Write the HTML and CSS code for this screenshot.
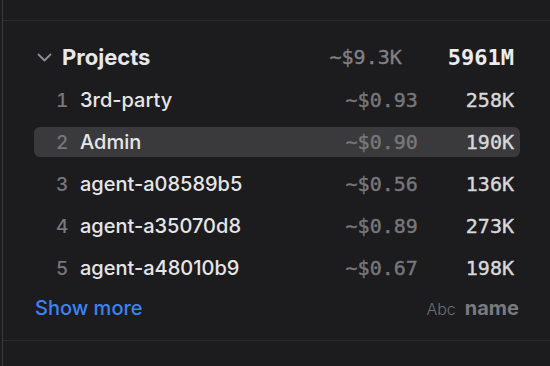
FILE: index.html
```html
<!DOCTYPE html>
<html>
<head>
<meta charset="utf-8">
<link rel="stylesheet" href="styles.css">
</head>
<body>
<div class="frame">
  <div class="top"></div>
  <section class="panel">
    <div class="header">
      <svg class="chev" width="15" height="9" viewBox="0 0 15 9"><path d="M1.5 1.5 L7.5 7.5 L13.5 1.5" fill="none" stroke="#8e8e93" stroke-width="1.8" stroke-linecap="round" stroke-linejoin="round"/></svg>
      <span class="title">Projects</span>
      <span class="hcost">~$9.3K</span>
      <span class="htok">5961M</span>
    </div>
    <div class="rows">
      <div class="row"><span class="num">1</span><span class="name">3rd-party</span><span class="cost">~$0.93</span><span class="tok">258K</span></div>
      <div class="row sel"><span class="num">2</span><span class="name">Admin</span><span class="cost">~$0.90</span><span class="tok">190K</span></div>
      <div class="row"><span class="num">3</span><span class="name">agent-a08589b5</span><span class="cost">~$0.56</span><span class="tok">136K</span></div>
      <div class="row"><span class="num">4</span><span class="name">agent-a35070d8</span><span class="cost">~$0.89</span><span class="tok">273K</span></div>
      <div class="row"><span class="num">5</span><span class="name">agent-a48010b9</span><span class="cost">~$0.67</span><span class="tok">198K</span></div>
    </div>
    <div class="footer">
      <span class="more">Show more</span>
      <span class="sort"><span class="abc">Abc</span><span class="by">name</span></span>
    </div>
  </section>
  <div class="bottom"></div>
</div>
</body>
</html>
```
FILE: styles.css
```css
html, body {
  margin: 0;
  padding: 0;
  background: #1c1c1e;
  height: 366px;
  overflow: hidden;
}
.frame {
  margin-left: 2px;
  border-left: 1px solid #3a3a3c;
  height: 366px;
  font-family: Inter, "Noto Sans", sans-serif;
}
.top {
  height: 20px;
  border-bottom: 1px solid #2a2a2c;
}
.panel {
  padding: 21px 30px 0 31px;
  height: 320px;
  border-bottom: 1px solid #2a2a2c;
  box-sizing: border-box;
}
.header {
  display: flex;
  align-items: center;
  height: 30px;
  padding: 0 6px 0 3px;
}
.chev { margin-right: 10px; margin-top: 1px; }
.title {
  flex: 1;
  font-weight: 700;
  font-size: 22px;
  color: #e8e8ea;
}
.hcost {
  font-family: "DejaVu Sans Mono", monospace;
  font-size: 20px;
  color: #808085;
  margin-right: 46px;
  -webkit-text-stroke: 0.35px #808085;
}
.htok {
  font-family: "DejaVu Sans Mono", monospace;
  font-weight: 700;
  font-size: 22px;
  color: #ececee;
}
.rows {
  display: flex;
  flex-direction: column;
  gap: 12px;
  margin-top: 13px;
}
.row {
  display: flex;
  align-items: center;
  height: 30px;
  padding: 0 6px 0 22px;
  border-radius: 6px;
}
.row.sel { background: #3a3a3c; }
.num {
  width: 24px;
  font-size: 19px;
  font-weight: 500;
  color: #77777c;
  font-variant-numeric: tabular-nums;
}
.name {
  flex: 1;
  font-size: 20px;
  font-weight: 500;
  color: #e6e6e8;
}
.cost {
  font-family: "DejaVu Sans Mono", monospace;
  font-size: 20px;
  color: #77777b;
  margin-right: 48px;
  -webkit-text-stroke: 0.4px #77777b;
}
.tok {
  font-family: "DejaVu Sans Mono", monospace;
  font-size: 20px;
  color: #d8d8da;
  -webkit-text-stroke: 0.4px #d8d8da;
}
.footer {
  display: flex;
  align-items: center;
  justify-content: space-between;
  height: 30px;
  margin-top: 10px;
  padding: 0 1px 0 1px;
}
.more {
  font-size: 20px;
  font-weight: 500;
  color: #3b82f6;
}
.sort { display: flex; align-items: baseline; gap: 9px; }
.abc {
  font-size: 16px;
  font-weight: 300;
  color: #6e6e73;
}
.by {
  font-size: 20px;
  font-weight: 700;
  color: #7a7a7e;
}
```
